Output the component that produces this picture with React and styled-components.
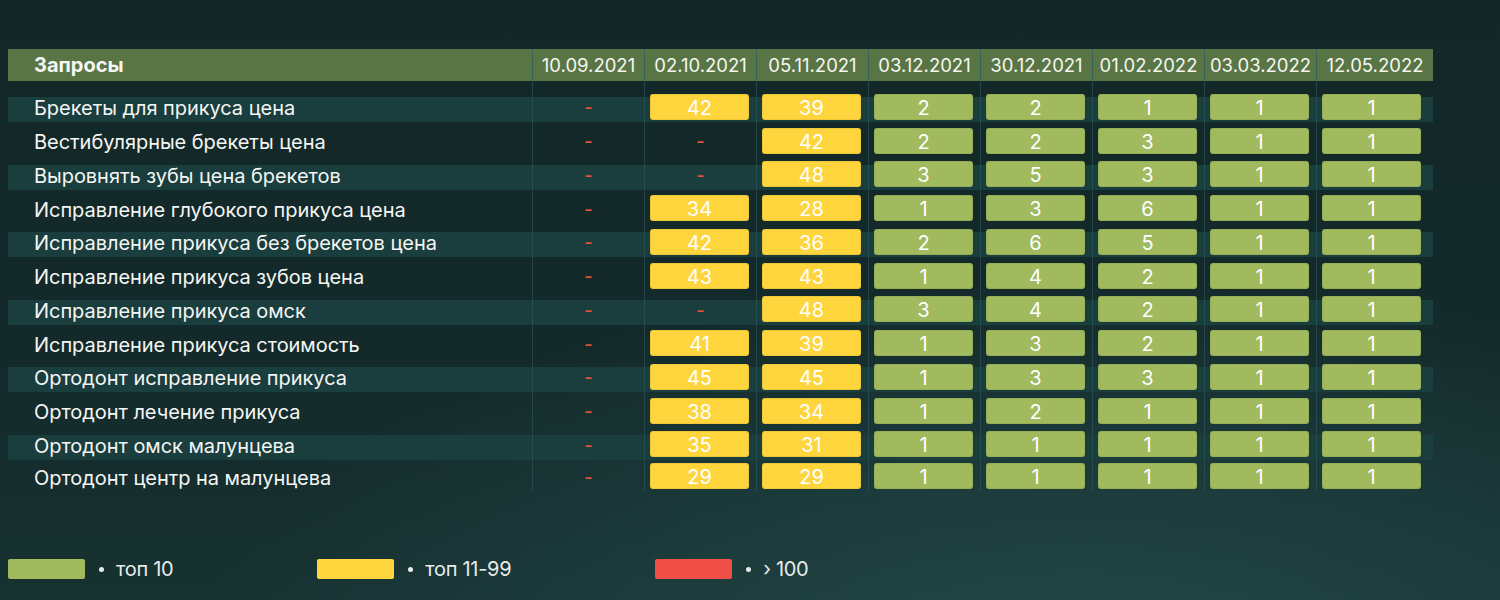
import React from 'react';
import styled, { createGlobalStyle } from 'styled-components';

const GlobalStyle = createGlobalStyle`
  html, body {
    margin: 0;
    padding: 0;
  }
  body {
    font-family: Inter, "Noto Sans", "DejaVu Sans", sans-serif;
    background: #142828;
  }
`;

const dates = ['10.09.2021', '02.10.2021', '05.11.2021', '03.12.2021', '30.12.2021', '01.02.2022', '03.03.2022', '12.05.2022'];

const rows = [
  ['Брекеты для прикуса цена', [null, 42, 39, 2, 2, 1, 1, 1]],
  ['Вестибулярные брекеты цена', [null, null, 42, 2, 2, 3, 1, 1]],
  ['Выровнять зубы цена брекетов', [null, null, 48, 3, 5, 3, 1, 1]],
  ['Исправление глубокого прикуса цена', [null, 34, 28, 1, 3, 6, 1, 1]],
  ['Исправление прикуса без брекетов цена', [null, 42, 36, 2, 6, 5, 1, 1]],
  ['Исправление прикуса зубов цена', [null, 43, 43, 1, 4, 2, 1, 1]],
  ['Исправление прикуса омск', [null, null, 48, 3, 4, 2, 1, 1]],
  ['Исправление прикуса стоимость', [null, 41, 39, 1, 3, 2, 1, 1]],
  ['Ортодонт исправление прикуса', [null, 45, 45, 1, 3, 3, 1, 1]],
  ['Ортодонт лечение прикуса', [null, 38, 34, 1, 2, 1, 1, 1]],
  ['Ортодонт омск малунцева', [null, 35, 31, 1, 1, 1, 1, 1]],
  ['Ортодонт центр на малунцева', [null, 29, 29, 1, 1, 1, 1, 1]],
];

const colors = {
  green: '#a1ba5d',
  yellow: '#fed53d',
  red: '#ef4f47',
};

const Page = styled.div`
  width: 1500px;
  height: 600px;
  box-sizing: border-box;
  padding: 49px 0 0 8px;
  background:
    radial-gradient(ellipse 900px 420px at 72% 115%, rgba(36, 74, 74, 0.95) 0%, rgba(36, 74, 74, 0) 100%),
    linear-gradient(180deg, #132727 0%, #142a2a 60%, #173131 100%);
  color: #fff;
  overflow: hidden;
`;

const Table = styled.div`
  width: 1425px;
`;

const Row = styled.div`
  display: grid;
  grid-template-columns: 524px repeat(7, 112px) 117px;
  height: ${({ h }) => h}px;
  background: ${({ striped }) =>
    striped ? 'linear-gradient(#1a3d3d, #1a3d3d) 0 7px / 100% 25px no-repeat' : 'none'};
`;

const HeaderRow = styled(Row)`
  background: #5a7545;
`;

const Cell = styled.div`
  display: flex;
  align-items: center;
  justify-content: center;
  border-left: 1px solid ${({ head }) => (head ? 'rgba(44, 94, 96, 0.75)' : 'rgba(45, 88, 94, 0.6)')};
  box-sizing: border-box;
`;

const NameCell = styled.div`
  display: flex;
  align-items: center;
  padding: ${({ head }) => (head ? '0' : '3px')} 0 0 26px;
  font-size: 20px;
  font-weight: ${({ head }) => (head ? 700 : 400)};
  color: #f4f6f4;
  white-space: nowrap;
  letter-spacing: ${({ head }) => (head ? '0' : '-0.05px')};
`;

const DateText = styled.span`
  font-size: 18.5px;
  color: #f4f6f0;
  white-space: nowrap;
`;

const Badge = styled.div`
  width: 99px;
  height: 26px;
  margin-left: 5px;
  padding-top: 2px;
  box-sizing: border-box;
  border-radius: 3px;
  background: ${({ tone }) => colors[tone]};
  box-shadow: inset 0 0 0 1px rgba(0, 0, 0, 0.06);
  display: flex;
  align-items: center;
  justify-content: center;
  font-size: 20px;
  color: #fff;
`;

const BadgeCell = styled(Cell)`
  justify-content: flex-start;
`;

const Dash = styled.span`
  color: #e4533f;
  font-size: 18px;
  font-weight: 500;
  padding-top: 2px;
`;

const Legend = styled.div`
  display: flex;
  align-items: center;
  gap: 144px;
  margin-top: 66px;
`;

const LegendItem = styled.div`
  display: flex;
  align-items: center;
`;

const Swatch = styled.div`
  width: 77px;
  height: 20px;
  border-radius: 2px;
  background: ${({ tone }) => colors[tone]};
`;

const Bullet = styled.span`
  width: 5px;
  height: 5px;
  border-radius: 50%;
  background: #e6ecea;
  margin: 0 12px 0 14px;
`;

const LegendText = styled.span`
  font-size: 20px;
  color: #e6ecea;
  letter-spacing: -0.3px;
`;

function Value({ v }) {
  if (v == null) {
    return (
      <Cell>
        <Dash>-</Dash>
      </Cell>
    );
  }
  return (
    <BadgeCell>
      <Badge tone={v <= 10 ? 'green' : 'yellow'}>{v}</Badge>
    </BadgeCell>
  );
}

export default function App() {
  return (
    <>
      <GlobalStyle />
      <Page>
        <Table>
          <HeaderRow h={32}>
            <NameCell head>Запросы</NameCell>
            {dates.map((d) => (
              <Cell head key={d}>
                <DateText>{d}</DateText>
              </Cell>
            ))}
          </HeaderRow>
          <Row h={9}>
            <div />
            {dates.map((d) => (
              <Cell key={d} />
            ))}
          </Row>
          {rows.map(([name, vals], i) => (
            <Row h={i === rows.length - 1 ? 30 : 33.75} striped={i % 2 === 0} key={name}>
              <NameCell>{name}</NameCell>
              {vals.map((v, j) => (
                <Value v={v} key={j} />
              ))}
            </Row>
          ))}
        </Table>
        <Legend>
          <LegendItem>
            <Swatch tone="green" />
            <Bullet />
            <LegendText>топ 10</LegendText>
          </LegendItem>
          <LegendItem>
            <Swatch tone="yellow" />
            <Bullet />
            <LegendText>топ 11-99</LegendText>
          </LegendItem>
          <LegendItem>
            <Swatch tone="red" />
            <Bullet />
            <LegendText>› 100</LegendText>
          </LegendItem>
        </Legend>
      </Page>
    </>
  );
}
